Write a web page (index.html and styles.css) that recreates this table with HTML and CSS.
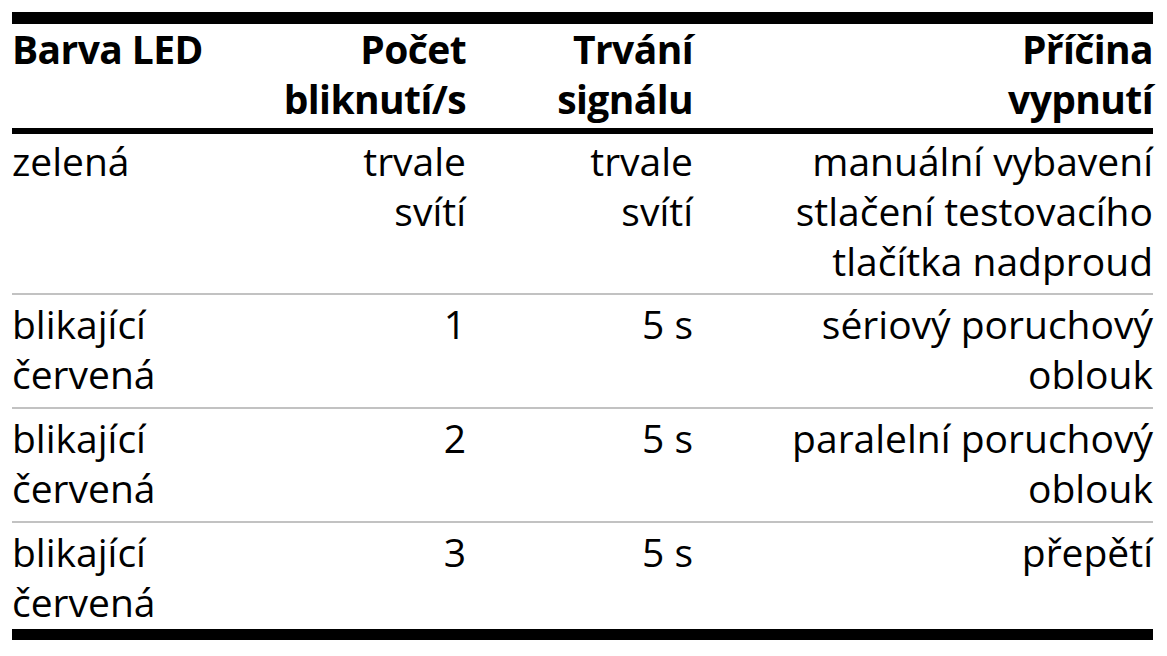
FILE: index.html
```html
<!DOCTYPE html>
<html lang="cs">
<head>
<meta charset="utf-8">
<title>Barva LED</title>
<link rel="stylesheet" href="styles.css">
</head>
<body>
<table class="led-table">
  <colgroup>
    <col class="c1"><col class="c2"><col class="c3"><col class="c4">
  </colgroup>
  <thead>
    <tr>
      <th class="left">Barva LED</th>
      <th>Počet<br>bliknutí/s</th>
      <th>Trvání<br>signálu</th>
      <th>Příčina<br>vypnutí</th>
    </tr>
  </thead>
  <tbody>
    <tr class="first">
      <td class="left">zelená</td>
      <td>trvale<br>svítí</td>
      <td>trvale<br>svítí</td>
      <td>manuální vybavení<br>stlačení testovacího<br>tlačítka nadproud</td>
    </tr>
    <tr>
      <td class="left">blikající<br>červená</td>
      <td>1</td>
      <td>5 s</td>
      <td>sériový poruchový<br>oblouk</td>
    </tr>
    <tr>
      <td class="left">blikající<br>červená</td>
      <td>2</td>
      <td>5 s</td>
      <td>paralelní poruchový<br>oblouk</td>
    </tr>
    <tr class="last">
      <td class="left">blikající<br>červená</td>
      <td>3</td>
      <td>5 s</td>
      <td>přepětí</td>
    </tr>
  </tbody>
</table>
</body>
</html>
```
FILE: styles.css
```css
html, body {
  margin: 0;
  padding: 0;
  background: #fff;
}
body {
  padding: 12px 0 0 12px;
  font-family: "Open Sans", "DejaVu Sans", sans-serif;
  color: #000;
}
.led-table {
  border-collapse: separate;
  border-spacing: 0;
  table-layout: fixed;
  width: 1141px;
  font-size: 39px;
  line-height: 50px;
}
.c1 { width: 227px; }
.c2 { width: 227px; }
.c3 { width: 227px; }
.c4 { width: 460px; }
.led-table th,
.led-table td {
  text-align: right;
  vertical-align: top;
  padding: 4px 0 8px 0;
}
.led-table th {
  font-weight: 700;
  letter-spacing: -0.6px;
  border-top: 12px solid #000;
  border-bottom: 6px solid #000;
  padding: 0 0 4px 0;
}
.led-table td {
  font-weight: 400;
  border-bottom: 2px solid #c2c2c2;
}
.led-table .left {
  text-align: left;
}
.led-table tr.first td {
  padding-top: 2px;
  padding-bottom: 7px;
}
.led-table tr.last td {
  border-bottom: 11px solid #000;
  padding-bottom: 2px;
}
```
